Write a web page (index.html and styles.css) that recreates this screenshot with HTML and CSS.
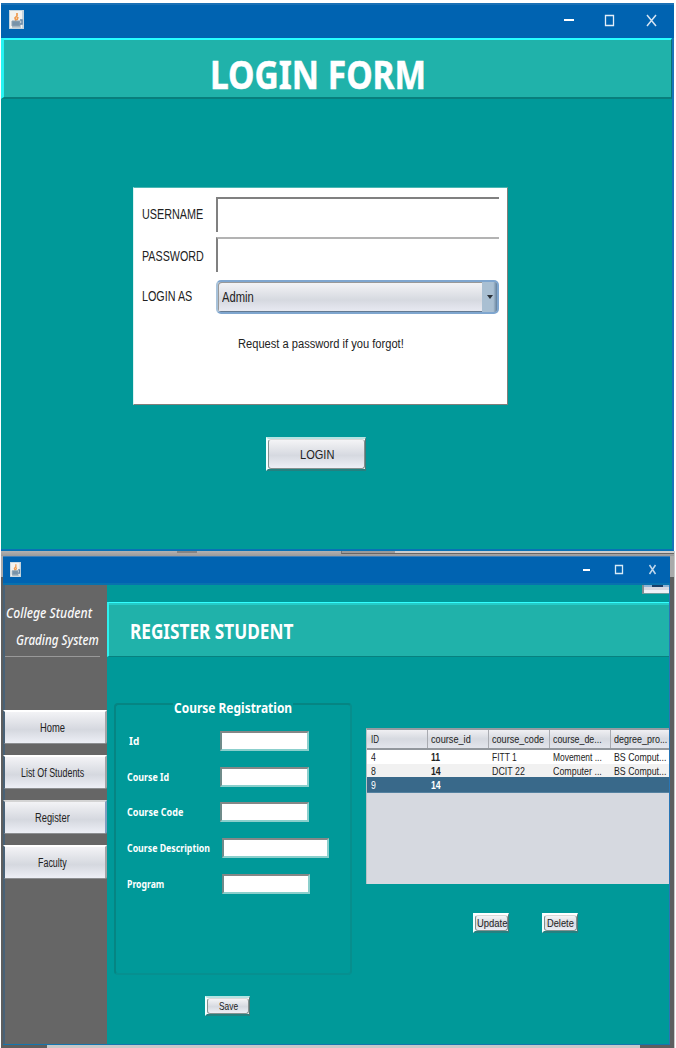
FILE: index.html
```html
<!DOCTYPE html>
<html lang="en">
<head>
<meta charset="utf-8">
<title>College Student Grading System</title>
<link rel="stylesheet" href="styles.css">
</head>
<body>
<svg width="0" height="0" class="defs">
  <symbol id="java" viewBox="0 0 15 19" preserveAspectRatio="none">
    <rect width="15" height="19" fill="#c3d3dd"/>
    <rect x="1" y="1" width="12" height="17" fill="#f2f2ef"/>
    <path d="M8 3v3l-2 2 1 3M9 7l-1 3" stroke="#ef9b50" stroke-width="1.7" fill="none"/>
    <path d="M3 11h8v5H3zM3 17h9" fill="#7893a9" stroke="#8ba1b2"/>
    <path d="M11 10h2v4h-2" stroke="#6688a8" stroke-width="1.5" fill="none"/>
  </symbol>
</svg>

<section class="window login">
  <header class="titlebar">
    <svg class="java"><use href="#java"/></svg>
    <svg class="controls" width="94" height="13" viewBox="0 0 94 13">
      <path d="M1 6h10" stroke="#fff" stroke-width="2"/>
      <path d="M42.500 1.500h8v10h-8z" stroke="#e4eef8" stroke-width="1.300" fill="none"/>
      <path d="M84 1l9 11M93 1l-9 11" stroke="#d5e4f2" stroke-width="1.500"/>
    </svg>
  </header>
  <div class="banner"><h1><span class="fit" data-w="216">LOGIN FORM</span></h1></div>
  <div class="panel">
    <label><span class="fit" data-w="61">USERNAME</span></label><div class="field"></div>
    <label class="low"><span class="fit" data-w="62">PASSWORD</span></label><div class="field soft"></div>
    <label><span class="fit" data-w="50">LOGIN AS</span></label>
    <div class="combo"><span class="fit" data-w="32">Admin</span><i class="arrow"></i></div>
    <p><span class="fit" data-w="166">Request a password if you forgot!</span></p>
  </div>
  <div class="btn login-btn"><b><span class="fit" data-w="34">LOGIN</span></b></div>
</section>

<div class="desktop">
  <div class="behind"><i></i><i></i></div>
  <section class="window register">
    <header class="titlebar">
      <svg class="java"><use href="#java"/></svg>
      <svg class="controls" width="75" height="12" viewBox="0 0 75 12">
        <path d="M0 6h7" stroke="#fff" stroke-width="2"/>
        <path d="M32.500 1.500h7v8h-7z" stroke="#d8eaf6" stroke-width="1.300" fill="none"/>
        <path d="M66.500 1l6 9M72.500 1l-6 9" stroke="#bfd7ec" stroke-width="1.500"/>
      </svg>
    </header>
    <div class="body">
      <nav>
        <div class="brand"><span class="fit" data-w="86">College Student</span></div>
        <div class="brand second"><span class="fit" data-w="83">Grading System</span></div>
        <hr>
        <div class="nav-btn"><span class="fit" data-w="25">Home</span></div>
        <div class="nav-btn"><span class="fit" data-w="63">List Of Students</span></div>
        <div class="nav-btn active"><span class="fit" data-w="35">Register</span></div>
        <div class="nav-btn"><span class="fit" data-w="29">Faculty</span></div>
      </nav>
      <main>
        <div class="top"><div class="clipped"></div></div>
        <div class="banner"><h2><span class="fit" data-w="163">REGISTER STUDENT</span></h2></div>
        <div class="columns">
          <div class="left">
            <div class="group">
              <h3><span class="fit" data-w="118">Course Registration</span></h3>
              <div class="row"><label class="in"><span class="fit" data-w="10">Id</span></label><div class="input"></div></div>
              <div class="row"><label><span class="fit" data-w="42">Course Id</span></label><div class="input"></div></div>
              <div class="row"><label><span class="fit" data-w="56">Course Code</span></label><div class="input"></div></div>
              <div class="row"><label><span class="fit" data-w="83">Course Description</span></label><div class="input wide"></div></div>
              <div class="row"><label><span class="fit" data-w="37">Program</span></label><div class="input shift"></div></div>
            </div>
            <div class="btn save"><b><span class="fit" data-w="19">Save</span></b></div>
          </div>
          <div class="right">
            <div class="table">
              <div class="tr th"><div><span class="fit" data-w="8">ID</span></div><div><span class="fit" data-w="40">course_id</span></div><div><span class="fit" data-w="52">course_code</span></div><div><span class="fit" data-w="49">course_de...</span></div><div><span class="fit" data-w="53">degree_pro...</span></div></div>
              <div class="tr"><div><span class="fit" data-w="5">4</span></div><div><span class="fit strong" data-w="9">11</span></div><div><span class="fit" data-w="25">FITT 1</span></div><div><span class="fit" data-w="49">Movement ...</span></div><div><span class="fit" data-w="52">BS Comput...</span></div></div>
              <div class="tr alt"><div><span class="fit" data-w="5">8</span></div><div><span class="fit strong" data-w="10">14</span></div><div><span class="fit" data-w="33">DCIT 22</span></div><div><span class="fit" data-w="49">Computer ...</span></div><div><span class="fit" data-w="52">BS Comput...</span></div></div>
              <div class="tr selected"><div><span class="fit" data-w="5">9</span></div><div><span class="fit strong" data-w="10">14</span></div><div></div><div></div><div></div></div>
            </div>
            <div class="actions">
              <div class="btn"><b><span class="fit" data-w="30">Update</span></b></div>
              <div class="btn"><b><span class="fit" data-w="27">Delete</span></b></div>
            </div>
          </div>
        </div>
      </main>
    </div>
  </section>
  <div class="strip"></div>
</div>
<script src="fit.js"></script>
</body>
</html>
```

FILE: styles.css
```css
* { box-sizing: border-box; margin: 0; padding: 0; }
body { width: 676px; height: 1048px; overflow: hidden; background: #fff; color: #222; font-family: "Liberation Sans", Arial, sans-serif; font-size: 12px; }
.defs { display: block; height: 0; }
.fit { display: inline-block; white-space: pre; }
.fit > span { display: inline-block; transform-origin: 0 50%; }

.window { background: #009999; }
.titlebar { display: flex; justify-content: space-between; background: #0063b1; }
.java { display: block; }

.login { width: 673px; height: 548px; margin: 3px 0 0 1px; border-right: 2px solid #1b73b9; border-bottom: 2px solid #0871b5; }
.login .titlebar { height: 35px; width: 673px; border-top: 2px solid #1a70b5; padding: 5px 17px 0 8px; }
.login .java { width: 15px; height: 19px; }
.login .controls { margin-top: 4px; }
.banner { background: #20b2aa; color: #fff; display: flex; align-items: center; }
.login .banner { height: 61px; border-top: 2px solid #27ffff; border-left: 3px solid #27f4f2; border-bottom: 2px solid #087f7d; border-right: 1px solid #087473; justify-content: center; padding: 11px 39px 0 0; }
h1, h2, h3 { font-family: "Noto Sans", sans-serif; font-weight: 700; }
h1 { font-size: 40px; line-height: 44px; -webkit-text-stroke: 0.5px #fff; }
.panel { width: 375px; height: 218px; margin: 88px 0 0 132px; background: #fff; border-top: 1px solid #4bb7b4; border-left: 1px solid #d8f3f2; border-right: 1px solid #817f7b; border-bottom: 1px solid #817f7b; padding: 9px 7px 0 8px; display: grid; grid-template-columns: 74px 283px; grid-template-rows: 40px 42px 36px 60px; font-size: 14px; }
.panel label { line-height: 35px; }
.panel label.low { line-height: 38px; }
.field { height: 35px; border-top: 2px solid #808080; border-left: 2px solid #808080; }
.field.soft { border-top-color: #b3b3b3; }
.combo { height: 34px; margin-top: 1px; border: 2px solid #7fa6cf; border-left-color: #a8c2da; border-radius: 5px; box-shadow: inset 1px 1px 0 #999, inset -1px -1px 0 #657b92; background: linear-gradient(#f5f5f7, #d6d9e0 60%, #e9ebf3); display: flex; justify-content: space-between; align-items: center; padding-left: 4px; }
.arrow { width: 15px; height: 30px; background: linear-gradient(90deg, #a9bfd2 75%, #63809c); border-radius: 0 3px 3px 0; display: flex; align-items: center; justify-content: center; }
.arrow::after { content: ""; border: 3px solid transparent; border-top: 4px solid #2a3038; border-bottom: 0; }
.panel p { grid-column: 1 / 3; font-size: 12px; padding: 22px 0 0 96px; }
.btn { background: #fff; border-top: 2px solid #b5e3e2; border-left: 2px solid #f2ffff; border-right: 1px solid #4d7777; border-bottom: 2px solid #258080; display: flex; }
.btn b { flex: 1; background: linear-gradient(#f4f4f6, #d6d9e0 55%, #edeff6); border: 1px solid #84908f; border-top-color: #d9d9d9; border-radius: 3px; font-weight: 400; display: flex; align-items: center; justify-content: center; }
.login-btn { width: 100px; height: 34px; margin: 32px 0 0 265px; font-size: 13px; }

.desktop { width: 673px; height: 497px; margin-left: 1px; background: linear-gradient(#aaa 0 26px, #5e5e5e 26px); box-shadow: 1px 0 #c9c9c9; }
.behind { height: 5px; padding-left: 172px; display: flex; justify-content: space-between; background: linear-gradient(#b2b2b2, #9a9a9a); }
.behind i:first-child { width: 20px; height: 2px; margin-left: 4px; background: #858585; }
.behind i:last-child { width: 333px; height: 3px; border-bottom: 1px solid #666; border-left: 1px solid #777; background: linear-gradient(90deg, #9b9b9b 53px, #ccc 53px); }
.register { width: 667px; height: 489px; margin-left: 2px; border-right: 1px solid #2875b5; border-bottom: 1px solid #1476ae; }
.register .titlebar { width: 667px; height: 29px; border-top: 1px solid #3d7fb8; border-bottom: 2px solid #0871ae; padding: 5px 12px 0 7px; }
.register .java { width: 11px; height: 15px; }
.register .controls { margin-top: 2px; }
.body { display: flex; height: 459px; }
nav { width: 104px; background: #666; border-left: 2px solid #496277; }
.brand { font: italic 500 14px/20px "Noto Sans", sans-serif; color: #fafafa; padding: 18px 0 0 1px; }
.second { padding: 7px 0 0 11px; }
nav hr { width: 95px; border: 0; border-top: 1px solid #999; margin: 6px 0 53px 0; }
.nav-btn { width: 104px; height: 34px; margin: 0 0 11px -2px; display: flex; align-items: center; justify-content: center; padding-right: 5px; background: linear-gradient(#f3f3f6, #d5d8df 57%, #edeff6); border-top: 2px solid #fff; border-left: 2px solid #496277; border-right: 2px solid #a2a4a7; border-bottom: 1px solid #8c8e91; border-radius: 0 0 2px 0; font-size: 12px; }
.nav-btn.active { border-top-color: #d4d4d4; border-right-color: #7f9dbd; }
main { flex: 1; min-width: 0; }
.top { height: 17px; display: flex; justify-content: flex-end; }
.clipped { width: 27px; height: 9px; background: linear-gradient(90deg, transparent 8px, #193e68 8px 19px, transparent 19px) 0 0 / 100% 2px no-repeat, linear-gradient(#8cb2d3 2px, #d7d9e2 2px 5px, #f0f1f7 5px); border-left: 2px solid #7e8e93; border-bottom: 1px solid #729d9e; }
.register .banner { height: 55px; border-top: 1px solid #31ffff; border-left: 2px solid #2ef1ee; border-bottom: 1px solid #07817f; box-shadow: inset 0 2px #25cbc7; padding: 3px 0 0 21px; }
h2 { font-size: 21px; line-height: 28px; }
.columns { display: flex; }
.left { width: 259px; padding: 46px 0 0 7px; }
.group { width: 238px; height: 272px; border: 2px solid #058583; border-right-color: #078e8d; border-bottom-color: #069090; border-radius: 4px; color: #fff; }
h3 { width: 120px; height: 20px; margin: -8px 0 14px 57px; padding-left: 1px; background: #099; font-size: 15px; line-height: 20px; }
.row { display: flex; height: 36px; }
.row:nth-of-type(2) { height: 35px; }
.row label { width: 94px; margin-right: 10px; padding-left: 11px; font: 700 11px/20px "Noto Sans", sans-serif; }
.row label.in { padding-left: 13px; }
.input { width: 89px; height: 20px; background: #fff; border: 2px solid #8bcfcc; border-top-color: #858787; border-left-color: #6e8b8a; }
.wide { width: 107px; margin-left: 2px; }
.shift { width: 88px; margin-left: 2px; }
.save { width: 45px; height: 20px; margin: 21px 0 0 91px; font-size: 11px; }
.right { width: 303px; padding-top: 71px; overflow: hidden; }
.table { height: 156px; background: #d6d9e0; border-top: 2px solid #949ba1; border-left: 1px solid #b5c2c6; font-size: 10.500px; }
.tr { display: grid; grid-template-columns: 60px 61px 61px 61px 59px; height: 14px; line-height: 14px; background: #fff; }
.tr div { padding-left: 4px; overflow: hidden; }
.th { height: 20px; line-height: 18px; font-size: 11px; background: linear-gradient(#f0f0f3, #d6d9e0 50%, #e3e5ec); border-bottom: 2px solid #92979d; }
.tr div + div { padding-left: 4px; }
.th div + div { border-left: 1px solid #a9abb1; padding-left: 3px; }
.alt { background: #f1f1f1; height: 13px; line-height: 14px; }
.selected { background: #39698a; color: #fff; height: 16px; line-height: 17px; border-bottom: 1px solid #5481a0; }
.strong { font-weight: 700; }
.actions { display: flex; gap: 33px; margin: 29px 0 0 107px; font-size: 11px; }
.actions .btn { width: 36px; height: 20px; border-top-color: #fff; }
.strip { height: 3px; margin: 0 34px 0 46px; background: #c8c8c8; }
```

FILE: fit.js
```js
document.querySelectorAll('.fit').forEach(function (el) {
  var inner = document.createElement('span');
  inner.textContent = el.textContent;
  el.textContent = '';
  el.appendChild(inner);
  var natural = inner.offsetWidth;
  el.style.width = el.dataset.w + 'px';
  inner.style.transform = 'scaleX(' + el.dataset.w / natural + ')';
});
```
